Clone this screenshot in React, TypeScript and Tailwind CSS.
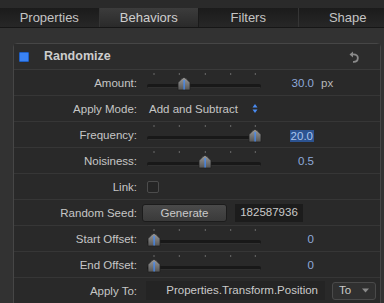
import React from "react";

const font = { fontFamily: '"Liberation Sans", Arial, sans-serif' };

const TICKS = [8, 33.3, 59.3, 84.7, 109.3];

function Slider({ pos }: { pos: number }) {
  return (
    <svg width="116" height="25" viewBox="0 0 116 25" className="shrink-0">
      <defs>
        <linearGradient id={`thumb-${pos}`} x1="0" y1="0" x2="0" y2="1">
          <stop offset="0" stopColor="#9a9a9a" />
          <stop offset="1" stopColor="#555" />
        </linearGradient>
      </defs>
      {TICKS.map((x) => (
        <rect key={x} x={x - 0.5} y="3" width="1" height="2" fill="#6a6a6a" />
      ))}
      <rect x="1" y="14" width="114" height="4" rx="2" fill="#181818" />
      <rect x="2" y="17" width="112" height="1" fill="#303030" />
      <path
        d={`M${pos} 7.5 Q${pos + 1} 7.5 ${pos + 2} 8.5 L${pos + 6} 12.5 L${pos + 6} 20 L${pos - 6} 20 L${pos - 6} 12.5 L${pos - 2} 8.5 Q${pos - 1} 7.5 ${pos} 7.5 Z`}
        fill={`url(#thumb-${pos})`}
        stroke="#222"
        strokeWidth="0.8"
      />
      <rect x={pos - 0.5} y="10" width="1.2" height="9.5" fill="#3f8cff" />
    </svg>
  );
}

function Row({ label, children }: { label: string; children: React.ReactNode }) {
  return (
    <div className="flex h-[26px] items-center border-b border-[#363636]">
      <div className="w-[123px] shrink-0 pt-[2px] text-right text-[11.5px] text-[#c6c6c6]">{label}</div>
      <div className="ml-[9px] flex h-full items-center">{children}</div>
    </div>
  );
}

function Value({ text, unit, selected }: { text: string; unit?: string; selected?: boolean }) {
  return (
    <div className="flex items-center pt-[2px]">
      <div className="flex w-[52px] justify-end text-[11.5px]">
        {selected ? (
          <span className="bg-[#2c5391] px-[1px] leading-[12px] text-[#a9c3ec]">{text}</span>
        ) : (
          <span className="text-[#8eaadb]">{text}</span>
        )}
      </div>
      {unit ? <span className="ml-[7px] text-[11.5px] text-[#b9b9b9]">{unit}</span> : null}
    </div>
  );
}

export default function App() {
  const tabs = ["Properties", "Behaviors", "Filters", "Shape"];
  return (
    <div style={font} className="h-[303px] w-[384px] overflow-hidden bg-[#323232]">
      <div className="h-[8px] bg-[#2a2a2a]" />
      <div className="flex h-[20px] w-[400px] border-b border-[#161616] bg-gradient-to-b from-[#1b1b1b] to-[#272727]">
        {tabs.map((t, i) => (
          <div
            key={t}
            className={
              "flex w-[99.5px] items-center justify-center border-r text-[13px] " +
              (i === 1
                ? "border-[#1a1a1a] bg-gradient-to-b from-[#3c3c3c] to-[#2a2a2a] text-[#cfcfcf]"
                : "border-[#353535] text-[#c4c4c4]")
            }
          >
            {t}
          </div>
        ))}
      </div>
      <div className="flex pt-[15px] pl-[13px] pr-[3px]">
        <div className="h-[300px] flex-1 rounded-t-[4px] border border-[#464646] bg-[#292929]">
          <div className="flex h-[26px] items-center border-b border-[#3a3a3a] bg-[#2c2c2c]">
            <div className="ml-[5px] h-[10px] w-[10px] rounded-[1px] border border-[#1f5fc4] bg-[#3a82f2]" />
            <div className="ml-[15px] text-[12.5px] font-bold text-[#cdcdcd]">Randomize</div>
            <svg width="10" height="12" viewBox="0 0 10 12" className="ml-auto mr-[21px]">
              <path d="M0.5 3.5 L4 0.5 L4 6.5 Z" fill="#8a8a8a" />
              <path d="M3.5 3.5 C7.5 3.2 9 5 8.8 7.3 C8.6 9.8 6.6 11 4 10.8" fill="none" stroke="#8a8a8a" strokeWidth="1.8" />
            </svg>
          </div>

          <Row label="Amount:">
            <Slider pos={38} />
            <Value text="30.0" unit="px" />
          </Row>
          <Row label="Apply Mode:">
            <span className="ml-[3px] pt-[2px] text-[11.5px] text-[#c6c6c6]">Add and Subtract</span>
            <svg width="6" height="11" viewBox="0 0 6 11" className="ml-[14px]">
              <path d="M0.5 4.5 L3 1 L5.5 4.5 Z" fill="#4a8cf2" />
              <path d="M0.5 6.5 L3 10 L5.5 6.5 Z" fill="#4a8cf2" />
            </svg>
          </Row>
          <Row label="Frequency:">
            <Slider pos={109} />
            <Value text="20.0" selected />
          </Row>
          <Row label="Noisiness:">
            <Slider pos={59} />
            <Value text="0.5" />
          </Row>
          <Row label="Link:">
            <div className="ml-[1px] h-[12px] w-[12px] rounded-[2px] border border-[#4c4c4c] bg-[#252525]" />
          </Row>
          <Row label="Random Seed:">
            <button
              type="button"
              className="-ml-[4px] h-[18px] w-[85px] rounded-[3px] border border-[#1c1c1c] bg-gradient-to-b from-[#4a4a4a] to-[#3a3a3a] text-[11.5px] text-[#cacaca]"
            >
              Generate
            </button>
            <div className="ml-[8px] flex h-[18px] w-[68px] items-center justify-center bg-[#1c1c1c] text-[11.5px] text-[#cacaca]">
              182587936
            </div>
          </Row>
          <Row label="Start Offset:">
            <Slider pos={8} />
            <Value text="0" />
          </Row>
          <Row label="End Offset:">
            <Slider pos={8} />
            <Value text="0" />
          </Row>
          <Row label="Apply To:">
            <div className="flex h-[19px] w-[179px] items-center justify-end bg-[#242424] pr-[7px] text-[11.5px] text-[#cacaca]">
              Properties.Transform.Position
            </div>
            <div className="ml-[7px] flex h-[18px] w-[44px] items-center justify-between rounded-[3px] border border-[#4a4a4a] bg-[#303030] px-[6px] text-[11.5px] text-[#cacaca]">
              <span>To</span>
              <svg width="7" height="5" viewBox="0 0 7 5">
                <path d="M0 0.5 L7 0.5 L3.5 4.5 Z" fill="#8a8a8a" />
              </svg>
            </div>
          </Row>
        </div>
      </div>
    </div>
  );
}
